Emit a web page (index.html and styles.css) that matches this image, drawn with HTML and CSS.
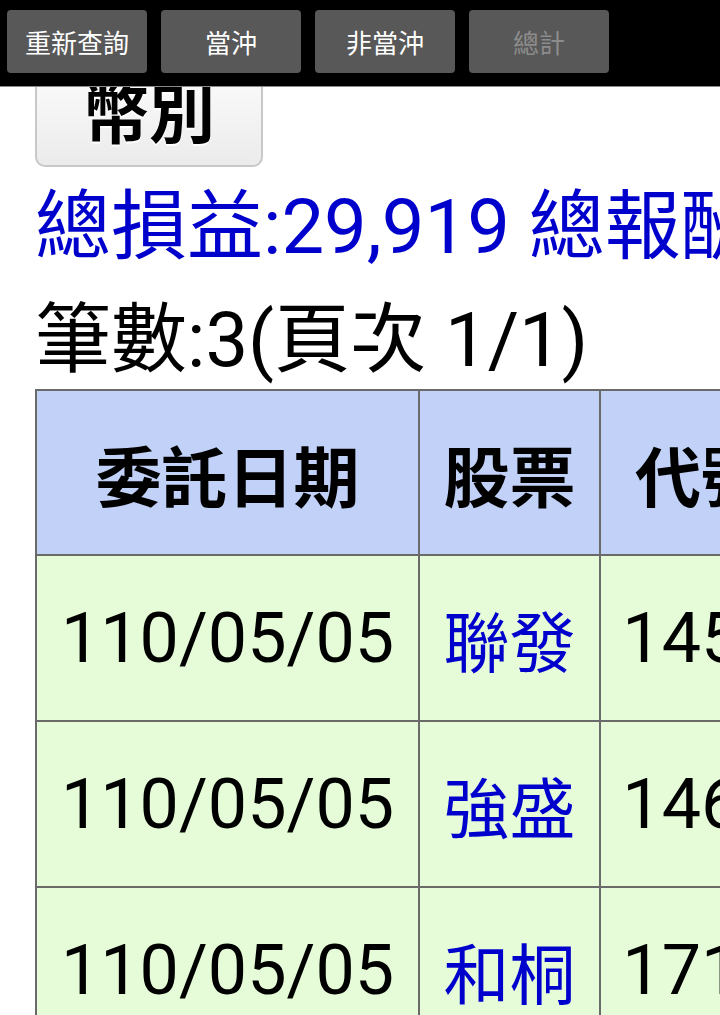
FILE: index.html
```html
<!DOCTYPE html>
<html lang="zh-Hant">
<head>
<meta charset="utf-8">
<title>委託查詢</title>
<link rel="stylesheet" href="styles.css">
</head>
<body>
<header class="toolbar">
  <button class="tool-btn">重新查詢</button>
  <button class="tool-btn">當沖</button>
  <button class="tool-btn">非當沖</button>
  <button class="tool-btn is-disabled" disabled>總計</button>
</header>
<main class="page">
  <button class="currency-btn">幣別</button>
  <div class="summary">總損益:29,919 總報酬率</div>
  <div class="count">筆數:3(頁次 1/1)</div>
  <div class="table-wrap">
    <table class="orders">
      <colgroup>
        <col class="col-date">
        <col class="col-name">
        <col class="col-code">
      </colgroup>
      <thead>
        <tr class="head-row">
          <th>委託日期</th>
          <th>股票</th>
          <th>代號</th>
        </tr>
      </thead>
      <tbody>
        <tr class="body-row">
          <td>110/05/05</td>
          <td class="name">聯發</td>
          <td>1459</td>
        </tr>
        <tr class="body-row">
          <td>110/05/05</td>
          <td class="name">強盛</td>
          <td>1463</td>
        </tr>
        <tr class="body-row">
          <td>110/05/05</td>
          <td class="name">和桐</td>
          <td>1714</td>
        </tr>
      </tbody>
    </table>
  </div>
</main>
</body>
</html>
```
FILE: styles.css
```css
html, body {
  margin: 0;
  padding: 0;
  background: #ffffff;
  overflow: hidden;
}

body {
  font-family: Roboto, "Noto Sans CJK TC", sans-serif;
  color: #000000;
}

.toolbar {
  position: fixed;
  top: 0;
  left: 0;
  right: 0;
  height: 87px;
  box-sizing: border-box;
  padding: 10px 7px 0;
  display: flex;
  align-items: flex-start;
  gap: 14px;
  background: #000000;
  border-bottom: 1px solid #8a8a8a;
  z-index: 10;
}

.tool-btn {
  width: 140px;
  height: 63px;
  padding: 0;
  border: 0;
  border-radius: 4px;
  background: #585858;
  color: #ffffff;
  font: 400 26px "Noto Sans CJK TC", sans-serif;
}

.tool-btn.is-disabled {
  color: #8c8c8c;
}

.page {
  padding-left: 35px;
  white-space: nowrap;
  overflow: hidden;
}

.currency-btn {
  display: block;
  margin: 50px 0 0;
  width: 228px;
  height: 117px;
  box-sizing: border-box;
  padding: 0;
  border: 2px solid #c8c8c8;
  border-radius: 10px;
  background: linear-gradient(#ffffff, #ebebeb);
  color: #000000;
  font: 700 66px "Noto Sans CJK TC", sans-serif;
  text-shadow: 0 2px 0 #ffffff;
}

.summary {
  font-size: 76px;
  line-height: 120px;
  color: #0000cc;
}

.count {
  margin-top: 4px;
  font-size: 76px;
  line-height: 98px;
}

.table-wrap {
  overflow: hidden;
}

.orders {
  table-layout: fixed;
  width: 768px;
  border-collapse: separate;
  border-spacing: 0;
  border-top: 2px solid #6a6a6a;
  border-left: 2px solid #6a6a6a;
}

.col-date { width: 383px; }
.col-name { width: 181px; }
.col-code { width: 202px; }

.orders th,
.orders td {
  padding: 0;
  border-right: 2px solid #6a6a6a;
  border-bottom: 2px solid #6a6a6a;
  text-align: center;
  vertical-align: middle;
  white-space: nowrap;
  overflow: hidden;
}

.head-row { height: 165px; }
.body-row { height: 166px; }

.orders th {
  background: #c1d1f8;
  font: 700 66px "Noto Sans CJK TC", sans-serif;
}

.orders td {
  background: #e6fcd8;
  font-size: 70px;
}

.orders td.name {
  color: #0000cc;
  font-family: "Noto Sans CJK TC", sans-serif;
  font-size: 66px;
}
```
